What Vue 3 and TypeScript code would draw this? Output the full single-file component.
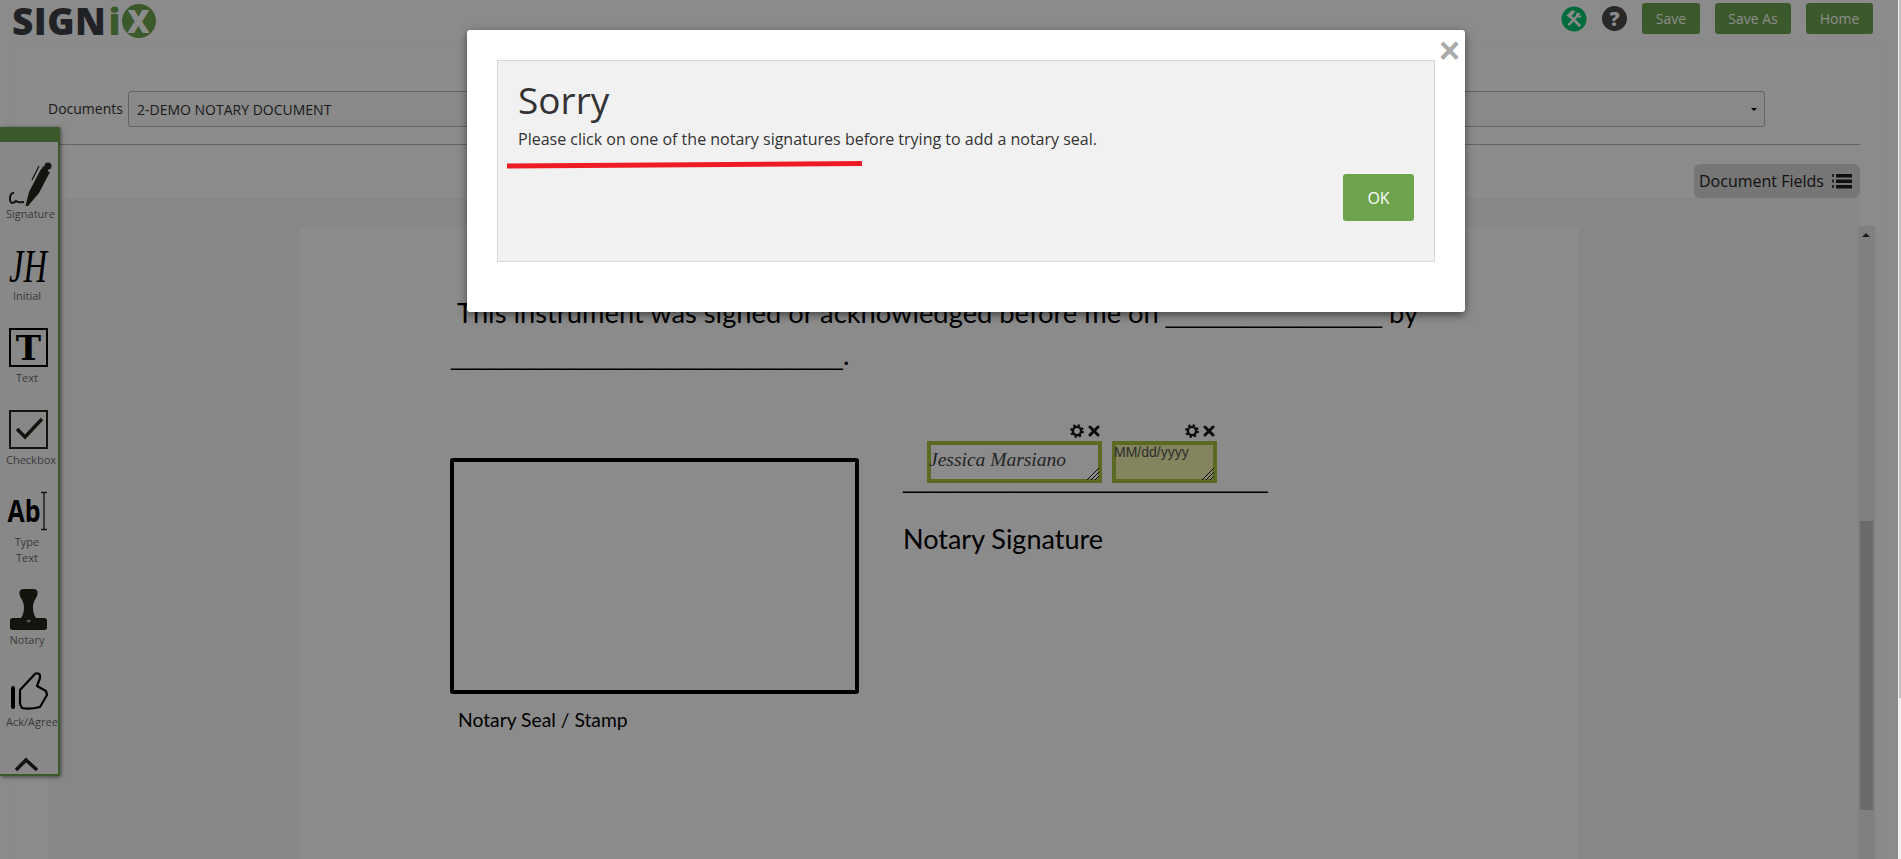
<script setup lang="ts">
interface Field { name: string; cls: string; text: string }
const fields: Field[] = [
  { name: 'sig', cls: 'field-sig', text: 'Jessica Marsiano' },
  { name: 'date', cls: 'field-date', text: 'MM/dd/yyyy' },
]
const actions: string[] = ['Save', 'Save As', 'Home']
</script>

<template>
  <div class="root">
    <div class="page">
      <header class="header">
        <div class="logo"><span class="logo-sign">SIGN</span><span class="logo-i">i</span><span class="logo-x">X</span></div>
        <div class="header-right">
          <svg class="round-icon" viewBox="0 0 26 26" width="26" height="26">
            <circle cx="13" cy="13" r="12.500" fill="#00c56c" />
            <path d="M8 18.500 18 8" stroke="#fff" stroke-width="2.400" stroke-linecap="round" />
            <path d="M16.500 6.200a3.300 3.300 0 0 0-1 4.300l1.500 1a3.300 3.300 0 0 0 4-2.500l-2.300 1.200-1.700-1.500Z" fill="#fff" />
            <path d="M9 10 18.500 19.500" stroke="#fff" stroke-width="2.600" stroke-linecap="round" />
            <path d="M5.500 9.500 10 5c2-.8 3.500-.3 4.500 1l-1.500.5-.5 1.500L8.500 12Z" fill="#fff" />
          </svg>
          <span class="help">?</span>
          <button v-for="a in actions" :key="a" class="btn-green" type="button">{{ a }}</button>
        </div>
      </header>

      <main class="panel">
        <div class="docbar">
          <label class="doc-label">Documents</label>
          <div class="select"><span>2-DEMO NOTARY DOCUMENT</span><i class="caret"></i></div>
        </div>
        <div class="rule"></div>
        <div class="actions">
          <button class="doc-fields" type="button">
            Document Fields
            <svg width="21" height="15" viewBox="0 0 21 15">
              <path d="M5 0h16v3.500H5zM5 5.500h16V9H5zM5 11h16v3.500H5z" fill="#1c1c1c" />
              <path d="M1 0h2v3H1zM1 5.500h2v3H1zM1 11h2v3H1z" fill="#1c1c1c" opacity=".8" />
            </svg>
          </button>
        </div>
        <section class="viewer">
          <article class="sheet">
            <p class="line line-1">This instrument was signed or acknowledged before me on <span class="us">________________</span> by</p>
            <p class="line line-2"><span class="us">_____________________________</span>.</p>
            <div class="sign-row">
              <div class="seal-col">
                <div class="seal"></div>
                <div class="seal-label">Notary Seal / Stamp</div>
              </div>
              <div class="sig-col">
                <div class="fields">
                  <div v-for="f in fields" :key="f.name" class="field" :class="f.cls">
                    <span class="field-text">{{ f.text }}</span>
                    <div class="field-tools">
                      <svg width="14" height="14" viewBox="0 0 13 13">
                        <circle cx="6.500" cy="6.500" r="3.800" fill="none" stroke="#141414" stroke-width="2.200" />
                        <circle cx="6.500" cy="6.500" r="5.400" fill="none" stroke="#141414" stroke-width="2" stroke-dasharray="2.100 2.140" />
                      </svg>
                      <svg width="12" height="12" viewBox="0 0 12 12">
                        <path d="M2 2l8 8M10 2l-8 8" stroke="#141414" stroke-width="3" stroke-linecap="round" />
                      </svg>
                    </div>
                    <svg class="hatch" width="12" height="12" viewBox="0 0 12 12">
                      <path d="M0 12 12 0M4 12 12 4M8 12 12 8" stroke="#111" stroke-width="1" fill="none" />
                    </svg>
                  </div>
                </div>
                <div class="sig-rule"><span class="us">___________________________</span></div>
                <div class="sig-label">Notary Signature</div>
              </div>
            </div>
          </article>
          <div class="track">
            <i class="track-arrow"></i>
            <div class="track-thumb"></div>
          </div>
        </section>
      </main>

      <aside class="toolbar">
        <div class="tool">
          <svg viewBox="0 0 60 50" width="60" height="50">
            <path d="M25.500 50 29 36 41 13 50 16 39 37 28 50Z" fill="#24261a" />
            <circle cx="48" cy="10" r="3.500" fill="#24261a" />
            <path d="M43 10 49 12 47 17 41 15Z" fill="#24261a" />
            <path d="M32 24 39 10" stroke="#24261a" stroke-width="1.300" />
            <path d="M14 37C9 36 9 47 12 47 14 47 15 46 16 45 18 47 20 46 24 46" fill="none" stroke="#24261a" stroke-width="2" />
          </svg>
          <span class="tool-label">Signature</span>
        </div>
        <div class="tool">
          <svg viewBox="0 0 60 50" width="60" height="50">
            <text x="9" y="44" class="jh" textLength="38" lengthAdjust="spacingAndGlyphs">JH</text>
          </svg>
          <span class="tool-label">Initial</span>
        </div>
        <div class="tool">
          <svg viewBox="0 0 60 50" width="60" height="50">
            <rect x="10" y="9" width="37" height="37" fill="none" stroke="#000" stroke-width="2" />
            <text x="28.500" y="40" text-anchor="middle" class="t-glyph">T</text>
          </svg>
          <span class="tool-label">Text</span>
        </div>
        <div class="tool">
          <svg viewBox="0 0 60 50" width="60" height="50">
            <rect x="10" y="9" width="37" height="37" fill="none" stroke="#24261a" stroke-width="2" />
            <path d="M17 27 25 35 42 17" fill="none" stroke="#24261a" stroke-width="3.500" />
          </svg>
          <span class="tool-label">Checkbox</span>
        </div>
        <div class="tool">
          <svg viewBox="0 0 60 50" width="60" height="50">
            <text x="7.500" y="38" class="ab-glyph" textLength="33" lengthAdjust="spacingAndGlyphs">Ab</text>
            <path d="M41 8.500h6M44 8.500v37M41 45.500h6" stroke="#24261a" stroke-width="1.300" fill="none" />
          </svg>
          <span class="tool-label">Type<br />Text</span>
        </div>
        <div class="tool">
          <svg viewBox="0 0 60 50" width="60" height="50">
            <path d="M24 7h9c3.500 0 5 2 4.500 5-.5 4-4.500 7-4.500 13 0 5 1 8 3 11H21c2-3 3-6 3-11 0-6-4-9-4.500-13C19 9 20.500 7 24 7Z" fill="#24261a" />
            <rect x="10" y="36" width="37" height="12" rx="2.500" fill="#24261a" />
            <path d="M26 38h5.500l-2.750 3Z" fill="#a8a8a8" />
          </svg>
          <span class="tool-label">Notary</span>
        </div>
        <div class="tool">
          <svg viewBox="0 0 60 50" width="60" height="50">
            <path d="M13 24v19" stroke="#000" stroke-width="4" stroke-linecap="round" />
            <path d="M20 26 34 11C36 8 41 9 40 14L37 22 46 27 47 31 40 43C32 45 27 45 22 44L20 40Z" fill="none" stroke="#000" stroke-width="2.200" stroke-linejoin="round" />
          </svg>
          <span class="tool-label">Ack/Agree</span>
        </div>
        <svg class="chevron" viewBox="0 0 60 18" width="60" height="18">
          <path d="M16 15 26 5 37 15" fill="none" stroke="#222" stroke-width="3.500" />
        </svg>
      </aside>

      <div class="backdrop"></div>

      <div class="modal">
        <span class="close">×</span>
        <div class="modal-inner">
          <h1 class="title">Sorry</h1>
          <p class="msg">Please click on one of the notary signatures before trying to add a notary seal.</p>
          <button class="ok" type="button">OK</button>
          <svg class="mark" width="356" height="8" viewBox="0 0 356 8">
            <path d="M0 2.500 355 0v5L0 7.500Z" fill="#ed1c24" />
          </svg>
        </div>
      </div>
    </div>
    <div class="outer-scroll"><div class="outer-thumb"></div></div>
  </div>
</template>

<style>
html, body { margin: 0; height: 100%; overflow: hidden; background: #fff; }
</style>

<style scoped>
.root { display: flex; width: 1901px; height: 859px; font-family: "Open Sans", "Liberation Sans", sans-serif; color: #333; overflow: hidden; }
.page { position: relative; width: 1898px; height: 859px; overflow: hidden; background: #fff; flex: none; display: flex; flex-direction: column; }
.outer-scroll { width: 3px; background: #f1f1f1; }
.outer-thumb { height: 698px; margin-left: 1px; background: #c1c1c1; }

.header { height: 41px; flex: none; display: flex; justify-content: space-between; align-items: flex-start; padding: 0 25px 0 12px; box-sizing: border-box; }
.logo { display: flex; align-items: center; height: 41px; font-weight: 800; font-size: 37px; letter-spacing: .5px; line-height: 41px; }
.logo-sign { color: #3c3f44; }
.logo-i { color: #6da34d; margin: 0 1px 0 2px; letter-spacing: 0; }
.logo-x { width: 34px; height: 34px; border-radius: 50%; background: #6da34d; color: #fff; font-size: 31px; line-height: 34px; text-align: center; letter-spacing: 0; margin-top: 0; }
.header-right { display: flex; align-items: flex-start; padding-top: 3px; }
.round-icon { margin: 3px 15px 0 0; }
.help { width: 25px; height: 25px; margin: 3px 15px 0 0; border-radius: 50%; background: #4a4a4a; color: #fff; font-weight: 800; font-size: 20px; line-height: 25px; text-align: center; }
.btn-green { height: 31px; padding: 0; margin-left: 15px; border: 0; border-radius: 3px; background: #6da34d; color: #fff; font: 400 14px "Open Sans", sans-serif; }
.btn-green:nth-of-type(1) { width: 58px; margin-left: 0; }
.btn-green:nth-of-type(2) { width: 76px; }
.btn-green:nth-of-type(3) { width: 67px; }

.panel { flex: 1; margin: 0 15px 0 10px; border: 1px solid #f9f9f9; border-bottom: 0; display: flex; flex-direction: column; min-height: 0; }
.docbar { display: flex; align-items: center; padding: 49px 0 0 37px; }
.doc-label { width: 80px; flex: none; font-size: 14px; line-height: 36px; }
.select { width: 1637px; height: 36px; box-sizing: border-box; display: flex; align-items: center; justify-content: space-between; padding: 0 8px; border: 1px solid #b8b8b8; border-radius: 3px; font-size: 14px; background: #fbfbfb; }
.caret { border: 3.500px solid transparent; border-top-color: #000; border-bottom: 0; margin-right: -1px; }
.rule { height: 1px; margin: 17px 22px 0 49px; background: #b8b8b8; }
.actions { display: flex; justify-content: flex-end; padding: 19px 22px 0 0; }
.doc-fields { width: 166px; height: 34px; box-sizing: border-box; display: flex; align-items: center; justify-content: space-between; padding: 0 8px 0 5px; border: 0; border-radius: 6px; background: #d8d8d8; color: #222; font: 400 16px "Open Sans", sans-serif; }

.viewer { flex: 1; min-height: 0; display: flex; margin: 0 22px 0 37px; padding-top: 29px; background: #f8f8f8; }
.sheet { width: 1279px; margin-left: 252px; margin-top: 1px; flex: none; background: #fff; box-sizing: border-box; padding: 0 0 0 150px; color: #000; font-family: Lato, "Liberation Sans", sans-serif; overflow: hidden; }
.line { margin: 0; font-size: 27.300px; line-height: 44px; white-space: nowrap; }
.us { font-family: "Liberation Sans", sans-serif; font-size: 24.300px; }
.line-1 { margin-top: 63px; padding-left: 7px; }
.line-2 { margin-top: -4px; padding-left: 1px; }
.sign-row { display: flex; margin-top: 79px; }
.seal-col { width: 453px; flex: none; }
.seal { width: 409px; height: 236px; box-sizing: border-box; border: 4px solid #000; border-radius: 3px; }
.seal-label { padding: 14px 0 0 8px; font-size: 19.300px; line-height: 24px; }
.sig-col { margin-top: -17px; }
.fields { display: flex; gap: 10px; padding-left: 24px; }
.field { position: relative; height: 42px; box-sizing: border-box; border: 4px solid #a9c03f; }
.field-sig { width: 175px; }
.field-date { width: 105px; background: #f2f2ad; }
.field-text { display: block; white-space: nowrap; }
.field-sig .field-text { font: italic 400 19.500px "Liberation Serif", serif; color: #444; line-height: 30px; margin-left: -2px; }
.field-date .field-text { font: 400 14px "Liberation Sans", sans-serif; color: #555; line-height: 14px; margin-left: -2px; }
.field-tools { position: absolute; right: -2px; top: -21px; display: flex; align-items: center; gap: 4px; }
.hatch { position: absolute; right: -1px; bottom: -1px; }
.sig-rule { line-height: 16px; margin-top: -11px; white-space: nowrap; }
.sig-label { font-size: 27px; line-height: 36px; margin-top: 31px; }

.track { position: relative; width: 17px; margin: -1px -15px 0 auto; background: #ebebeb; flex: none; }
.track-arrow { position: absolute; left: 4px; top: 7px; border: 4.500px solid transparent; border-bottom-color: #333; border-top: 0; }
.track-thumb { position: absolute; left: 2px; right: 2px; top: 295px; height: 289px; background: #c4c4c4; }

.toolbar { position: absolute; left: 0; top: 127px; width: 60px; height: 649px; box-sizing: border-box; padding-top: 29px; background: #fafafa; border-top: 15px solid #6da34d; border-right: 2px solid #6da34d; border-bottom: 2px solid #6da34d; box-shadow: 1px 1px 4px rgba(0,0,0,.5); display: flex; flex-direction: column; }
.tool { display: flex; flex-direction: column; margin-bottom: 16px; margin-top: 0; }
.tool:first-child { margin-top: -15px; }
.tool svg { display: block; }
.tool-label { width: fit-content; min-width: 42px; margin-left: 6px; font-size: 11px; line-height: 16px; text-align: center; white-space: nowrap; color: #6b6b6b; }
.jh { font: italic 400 47px "Liberation Serif", serif; fill: #000; }
.t-glyph { font: 700 34px "DejaVu Serif", serif; fill: #000; }
.ab-glyph { font: 700 31px "Open Sans", sans-serif; fill: #000; }
.chevron { display: block; margin-top: 9px; }

.backdrop { position: absolute; inset: 0; background: rgba(0,0,0,.455); }
.modal { position: absolute; left: 467px; top: 30px; width: 998px; height: 282px; box-sizing: border-box; padding: 30px 30px 50px; background: #fff; border-radius: 3px; box-shadow: 0 3px 9px rgba(0,0,0,.5); }
.close { position: absolute; right: 5px; top: 3px; color: #aaa; font: 700 36px/36px "Liberation Sans", sans-serif; }
.modal-inner { position: relative; height: 100%; box-sizing: border-box; padding: 20px; background: #f1f1f1; border: 1px solid #d8d8d8; display: flex; flex-direction: column; align-items: flex-start; }
.title { margin: -1px 0 0; font-size: 37px; font-weight: 400; line-height: 40px; color: #333; }
.msg { margin: 9px 0 0; font-size: 16px; line-height: 20px; color: #333; white-space: nowrap; }
.ok { align-self: flex-end; width: 71px; height: 47px; margin: 25px 0 0 0; border: 0; border-radius: 3px; background: #6da34d; color: #fff; font: 400 16px "Open Sans", sans-serif; }
.mark { position: absolute; left: 9px; top: 100px; }
</style>
